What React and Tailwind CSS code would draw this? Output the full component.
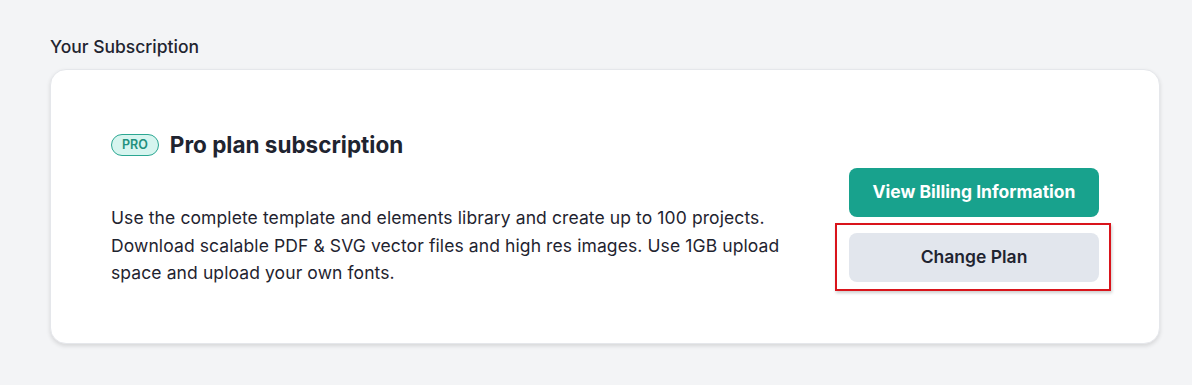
export default function App() {
    return (
        <div className="min-h-screen bg-[#f3f4f6] pl-[50px] pr-[32px] pt-[35px] pb-[42px] font-['Inter',sans-serif] text-[#1f2937]">
            {/* Section heading */}
            <h2 className="text-[17.5px] font-medium leading-[24px] mb-[10px] text-[#1f2430]">Your Subscription</h2>

            {/* Subscription card */}
            <div className="bg-white rounded-[16px] border border-[#e5e7eb] shadow-[0_2px_4px_rgba(0,0,0,0.12)] pl-[60px] pr-[60px] pt-[60px] pb-[56px] flex items-end justify-between">
                <div>
                    <div className="flex items-center gap-[11px]">
                        <span className="inline-flex items-center h-[22px] px-[10px] rounded-full border border-[#2ba792] bg-[#d6f5ef] text-[#22907d] text-[12.5px] font-semibold">
                            PRO
                        </span>
                        <h3 className="text-[22.5px] font-bold leading-[30px] text-[#1f2430]">Pro plan subscription</h3>
                    </div>
                    <p className="mt-[44px] text-[17.5px] tracking-[0.1px] leading-[27.5px] text-[#1f2430] whitespace-nowrap">
                        Use the complete template and elements library and create up to 100 projects.
                        <br />
                        Download scalable PDF &amp; SVG vector files and high res images. Use 1GB upload
                        <br />
                        space and upload your own fonts.
                    </p>
                </div>

                <div className="flex flex-col gap-[16px] w-[250px] mb-[5px]">
                    <button className="h-[49px] rounded-[8px] bg-[#18a28d] text-white text-[17.5px] font-bold">
                        View Billing Information
                    </button>
                    <div className="relative">
                        <button className="w-full h-[49px] rounded-[8px] bg-[#e2e6ed] text-[#1f2430] text-[17.5px] font-semibold">
                            Change Plan
                        </button>
                        {/* highlight box */}
                        <div className="absolute -left-[14px] -right-[12px] -top-[10px] -bottom-[9px] border-2 border-[#d9141b] shadow-[1px_2px_3px_rgba(0,0,0,0.2)] pointer-events-none" />
                    </div>
                </div>
            </div>
        </div>
    );
}
